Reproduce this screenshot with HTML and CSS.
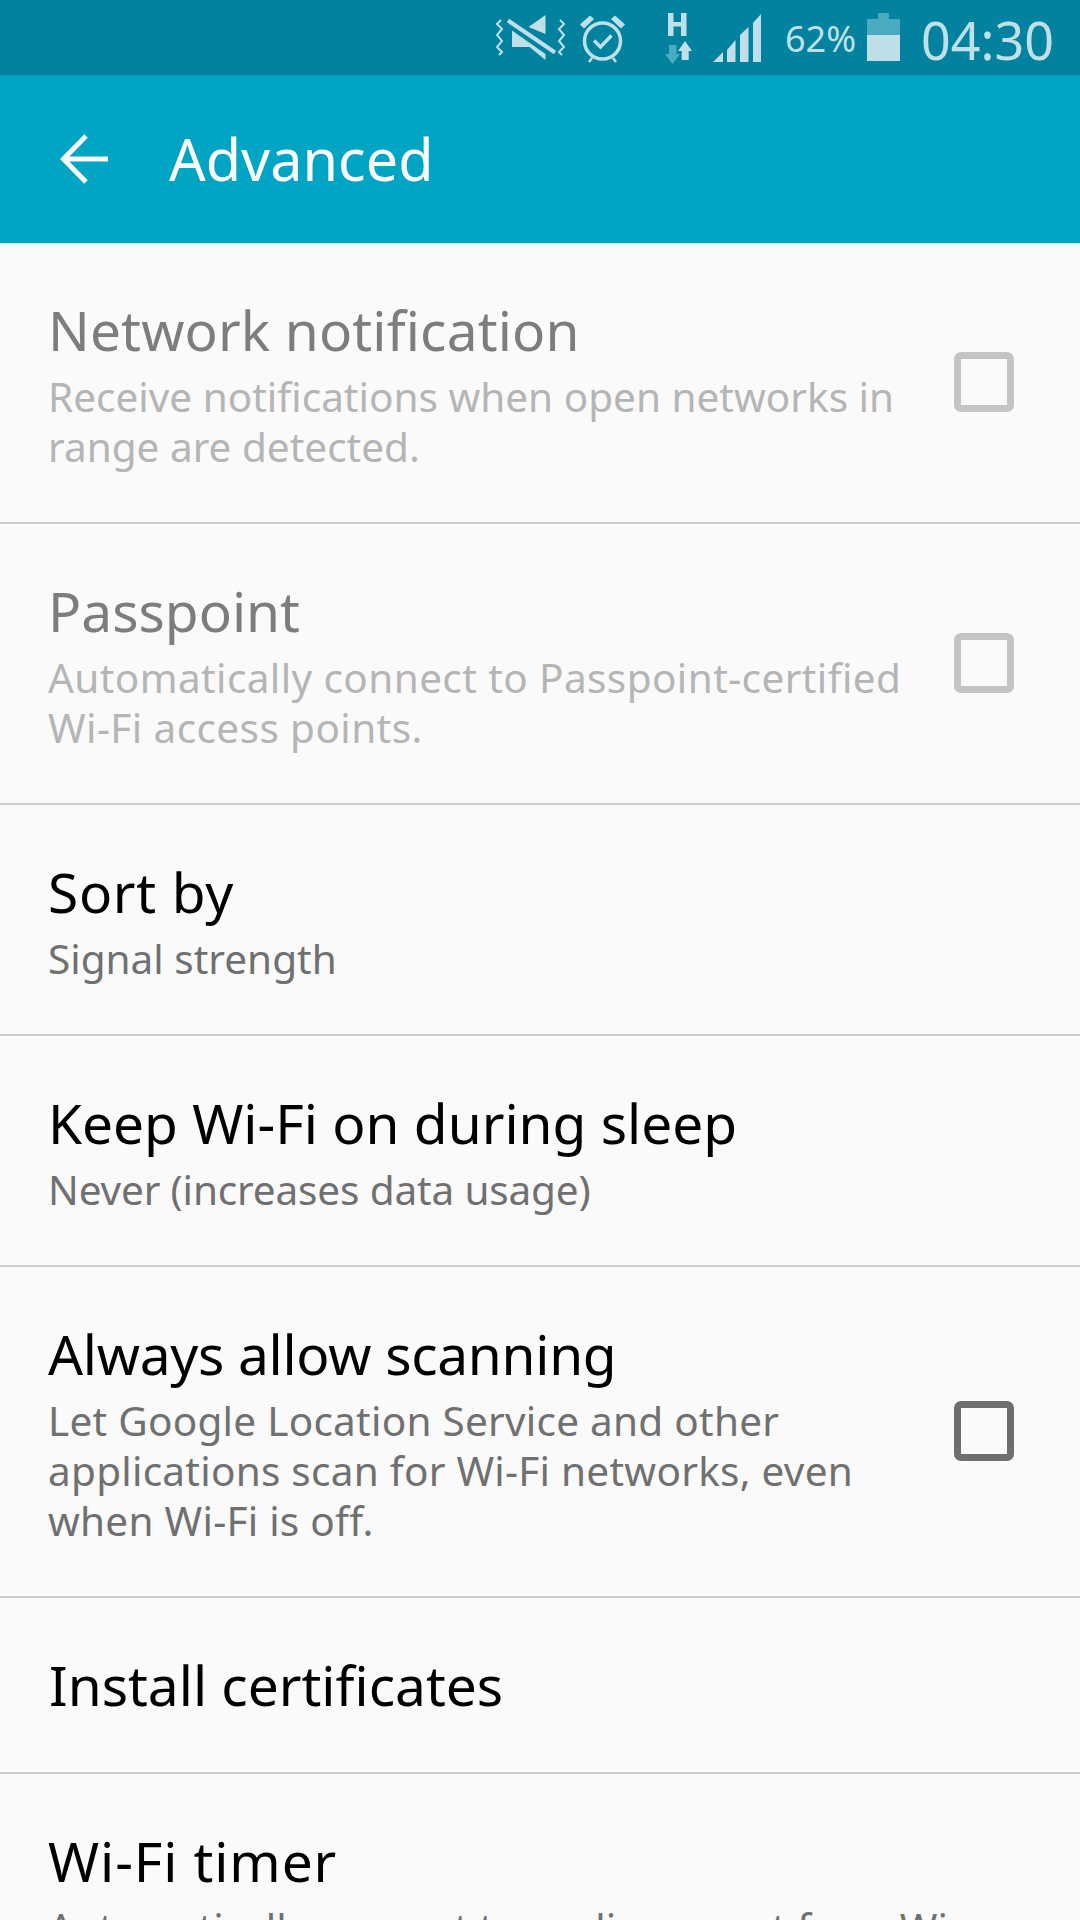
FILE: index.html
```html
<!DOCTYPE html>
<html lang="en">
<head>
<meta charset="utf-8">
<title>Advanced</title>
<link rel="stylesheet" href="styles.css">
</head>
<body>
<div class="screen">
  <header class="status">
    <svg class="ic-mute" width="70" height="46" viewBox="0 0 70 46" fill="none">
      <path d="M5 5L1 9l5 5-5 6 5 6-5 6 5 5-3 3" stroke="#bfe0e8" stroke-width="2"/>
      <path d="M64 5l4 4-5 5 5 6-5 6 5 6-5 5 3 3" stroke="#bfe0e8" stroke-width="2"/>
      <path d="M49.500 0v19L32.500 12z" fill="#bfe0e8"/>
      <path d="M16 15.500L49.500 39v6L33.500 32H16z" fill="#bfe0e8"/>
      <path d="M12 5.500L59 37.500" stroke="#bfe0e8" stroke-width="4"/>
    </svg>
    <svg class="ic-alarm" width="45" height="48" viewBox="0 0 45 48" fill="none">
      <circle cx="22.500" cy="26" r="18" stroke="#bfe0e8" stroke-width="3.500"/>
      <path d="M14 25.500l6.500 6.500 11-11.500" stroke="#bfe0e8" stroke-width="3.500"/>
      <path d="M1 9.500l9-8 3 2.500-9 8.500z M44 9.500l-9-8-3 2.500 9 8.500z" fill="#bfe0e8" stroke="#bfe0e8" stroke-width="1.500"/>
      <path d="M9 47l3-4M36 47l-3-4" stroke="#bfe0e8" stroke-width="2.500"/>
    </svg>
    <svg class="ic-net" width="27" height="52" viewBox="0 0 27 52">
      <path d="M3 0h5.500v9h7.500V0h5.500v23H16V13.500H8.500V23H3z" fill="#bfe0e8"/>
      <path d="M4 32h7.500v9H15L7.500 51 0 41h4z" fill="#4ba9c0"/>
      <path d="M20 28l7 10h-3.300v9h-7v-9H13z" fill="#bfe0e8"/>
    </svg>
    <svg class="ic-signal" width="48" height="48" viewBox="0 0 48 48" fill="#bfe0e8">
      <path d="M0 48l10-10v10z M14 48V36l8.500-10v22z M27 48V21l8.500-8v35z M40 48V9l8-9v48z"/>
    </svg>
    <span class="pct">62%</span>
    <svg class="ic-batt" width="33" height="48" viewBox="0 0 33 48">
      <path d="M11 0h11v6h11v16H0V6h11z" fill="#4ba9c0"/>
      <path d="M0 22h33v26H0z" fill="#bfe0e8"/>
    </svg>
    <span class="clock">04:30</span>
  </header>
  <div class="appbar">
    <svg class="back" width="48" height="50" viewBox="0 0 48 50" fill="none">
      <path d="M26 2L3.500 25 26 48M3.500 25H48" stroke="#fafafa" stroke-width="5"/>
    </svg>
    <h1 class="appbar-title">Advanced</h1>
  </div>
  <main class="list">
    <section class="row row-a disabled row-network">
      <div class="text">
        <div class="title">Network notification</div>
        <div class="sub">Receive notifications when open networks in<br>range are detected.</div>
      </div>
      <span class="check"></span>
    </section>
    <section class="row row-a disabled row-passpoint">
      <div class="text">
        <div class="title">Passpoint</div>
        <div class="sub">Automatically connect to Passpoint-certified<br>Wi-Fi access points.</div>
      </div>
      <span class="check"></span>
    </section>
    <section class="row row-b row-sort">
      <div class="text">
        <div class="title">Sort by</div>
        <div class="sub">Signal strength</div>
      </div>
    </section>
    <section class="row row-b row-keep">
      <div class="text">
        <div class="title">Keep Wi-Fi on during sleep</div>
        <div class="sub">Never (increases data usage)</div>
      </div>
    </section>
    <section class="row row-c row-scan">
      <div class="text">
        <div class="title">Always allow scanning</div>
        <div class="sub">Let Google Location Service and other<br>applications scan for Wi-Fi networks, even<br>when Wi-Fi is off.</div>
      </div>
      <span class="check"></span>
    </section>
    <section class="row row-d">
      <div class="text">
        <div class="title">Install certificates</div>
      </div>
    </section>
    <section class="row row-e">
      <div class="text">
        <div class="title">Wi-Fi timer</div>
        <div class="sub">Automatically connect to or disconnect from Wi-</div>
      </div>
    </section>
  </main>
</div>
</body>
</html>
```

FILE: styles.css
```css
* { box-sizing: border-box; }
html, body { margin: 0; padding: 0; }
body { width: 1080px; height: 1920px; overflow: hidden; background: #fafafa; font-family: "Noto Sans", sans-serif; }
.screen { width: 1080px; height: 1920px; overflow: hidden; display: flex; flex-direction: column; }

.status { height: 75px; flex: none; background: #02829f; display: flex; align-items: flex-start; color: #bfe0e8; padding-left: 496px; }
.ic-mute { margin-top: 15px; flex: none; }
.ic-alarm { margin: 15px 0 0 14px; flex: none; }
.ic-net { margin: 13px 0 0 40px; flex: none; }
.ic-signal { margin: 14px 0 0 21px; flex: none; }
.pct { margin: 16px 0 0 24px; font-size: 36px; line-height: 46px; width: 82px; flex: none; }
.ic-batt { margin-top: 13px; flex: none; }
.clock { margin: 5px 0 0 21px; font-size: 52px; line-height: 70px; }

.appbar { height: 168px; flex: none; background: #00a5c4; display: flex; align-items: center; padding-left: 60px; }
.back { flex: none; }
.appbar-title { margin: 0 0 0 61px; font-size: 57.500px; font-weight: 400; line-height: 70px; color: #fafafa; }

.list { flex: 1; display: flex; flex-direction: column; }
.row { flex: none; display: flex; align-items: flex-start; padding: 0 66px 0 48px; border-bottom: 2px solid #cdcdcd; }
.row-a { height: 281px; }
.row-b { height: 231px; }
.row-c { height: 331px; }
.row-d { height: 176px; }
.row-e { height: 200px; border-bottom: 0; }
.text { flex: 1; padding-top: 57px; }
.title { font-size: 55px; line-height: 60px; color: #000; }
.sub { margin-top: 12px; font-size: 40.500px; line-height: 50px; color: #707070; }
.disabled .title { color: #7d7d7d; }
.disabled .sub { color: #b5b5b5; }
.row-network .title { letter-spacing: 0.150px; }
.row-passpoint .sub { letter-spacing: 0.400px; }
.row-sort .title { letter-spacing: 0.700px; }
.row-keep .sub { letter-spacing: -0.150px; }
.row-scan .title { letter-spacing: -0.300px; }
.row-scan .sub { letter-spacing: 0.250px; }
.row-d .text { padding-top: 57px; }
.row-d .title { padding-left: 1px; }
.row-e .title { letter-spacing: 0.900px; }
.check { flex: none; width: 60px; height: 60px; border: 7px solid #6e6e6e; border-radius: 7px; align-self: center; margin-bottom: 2px; }
.disabled .check { border-color: #c4c4c4; }
```
